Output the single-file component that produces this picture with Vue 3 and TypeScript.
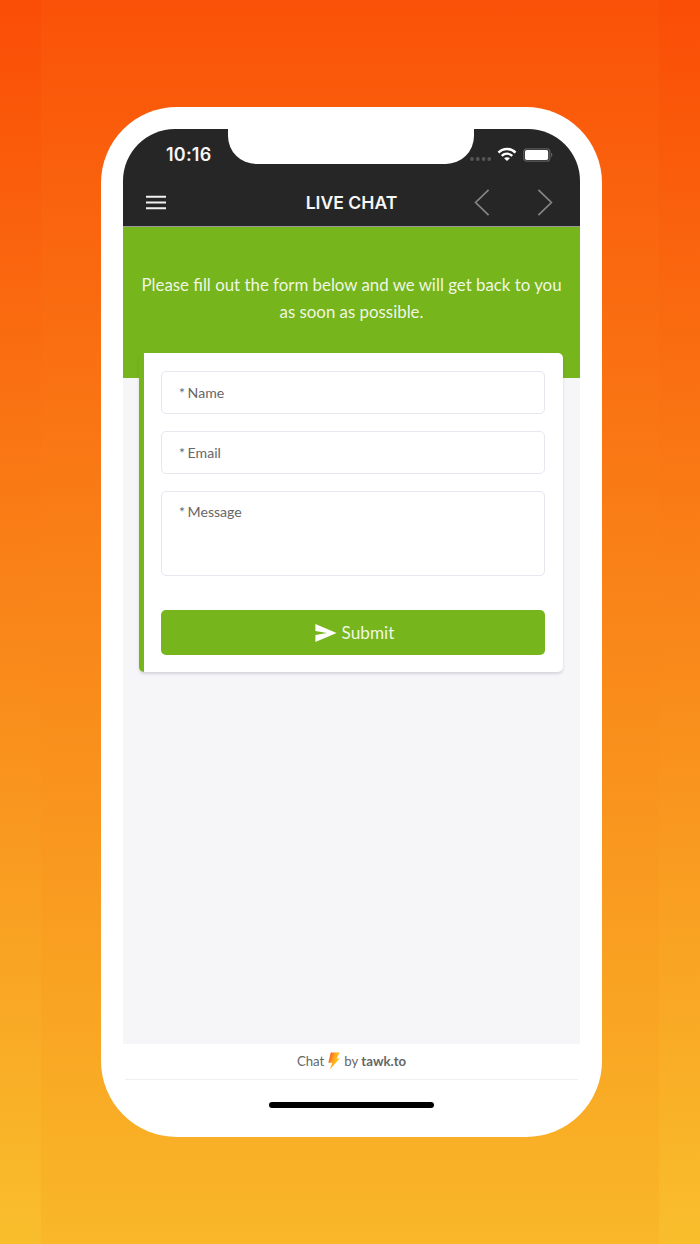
<template>
  <div class="page">
    <div class="phone">
      <div class="screen">
        <div class="notch"></div>
        <!-- 状态栏 -->
        <div class="status">
          <span class="time">10:16</span>
          <div class="signals">
            <svg width="22" height="6" viewBox="0 0 22 6" fill="#555">
              <circle cx="2" cy="3" r="1.9" />
              <circle cx="7.8" cy="3" r="1.9" />
              <circle cx="13.6" cy="3" r="1.9" />
              <circle cx="19.2" cy="3" r="1.9" />
            </svg>
            <svg class="wifi" width="20" height="15" viewBox="0 0 20 15" fill="none" stroke="#fff">
              <path d="M1.5 5.6C6.2 0.8 13.8 0.8 18.5 5.6" stroke-width="2.5" />
              <path d="M4.7 8.9C7.8 6 12.2 6 15.3 8.9" stroke-width="2.3" />
              <path d="M10 14L7.1 11.2C8.7 9.8 11.3 9.8 12.9 11.2Z" fill="#fff" stroke="none" />
            </svg>
            <svg class="battery" width="30" height="14" viewBox="0 0 30 14">
              <rect x="0.8" y="0.8" width="26" height="12.4" rx="3" fill="none" stroke="#5c5c5c" stroke-width="1.3" />
              <rect x="2" y="2" width="23.2" height="10" rx="1.8" fill="#fff" />
              <path d="M28 4.8C29.8 5.4 29.8 8.6 28 9.2Z" fill="#5c5c5c" />
            </svg>
          </div>
        </div>

        <!-- 导航栏 -->
        <div class="nav">
          <svg class="menu" width="20" height="16" viewBox="0 0 20 16" stroke="#f2f2f2" stroke-width="2">
            <path d="M0 1.7H20M0 7.5H20M0 13.3H20" />
          </svg>
          <h1>LIVE CHAT</h1>
          <div class="arrows">
            <svg width="16" height="28" viewBox="0 0 16 28" fill="none" stroke="#858585" stroke-width="1.7">
              <path d="M14.6 0.8L1.6 13.5L14.6 26.2" />
            </svg>
            <svg width="16" height="28" viewBox="0 0 16 28" fill="none" stroke="#858585" stroke-width="1.7">
              <path d="M1.4 0.8L14.4 13.5L1.4 26.2" />
            </svg>
          </div>
        </div>

        <div class="banner">
          <p>Please fill out the form below and we will get back to you<br />as soon as possible.</p>
        </div>

        <!-- 表单 -->
        <form class="card" @submit.prevent="submit">
          <input v-model="form.name" type="text" placeholder="* Name" />
          <input v-model="form.email" type="text" placeholder="* Email" />
          <textarea v-model="form.message" placeholder="* Message"></textarea>
          <button type="submit">
            <svg width="22" height="18" viewBox="0 0 22 18" fill="#fff">
              <path d="M0.4 0L21.6 9L0.4 18V11L12 9L0.4 7Z" />
            </svg>
            <span>Submit</span>
          </button>
        </form>
      </div>

      <div class="footer">
        <span>Chat</span>
        <svg width="12" height="18" viewBox="0 0 12 18">
          <defs>
            <linearGradient id="bolt" x1="0" y1="0" x2="1" y2="0.5">
              <stop offset="0.1" stop-color="#f4511e" />
              <stop offset="0.5" stop-color="#ffa51b" />
              <stop offset="1" stop-color="#ffd21f" />
            </linearGradient>
          </defs>
          <path d="M2.8 0.5H11.8L8.6 6.4H11.8L1.8 17.5L4.3 10.7H0.3Z" fill="url(#bolt)" />
        </svg>
        <span>by <b>tawk.to</b></span>
      </div>
      <div class="home"></div>
    </div>
  </div>
</template>

<script setup lang="ts">
import { reactive } from 'vue'

interface ChatForm {
  name: string
  email: string
  message: string
}

const form = reactive<ChatForm>({
  name: '',
  email: '',
  message: ''
})

const submit = () => {
  console.log('form=', form)
}
</script>

<style>
body {
  margin: 0;
}
</style>

<style scoped>
* {
  box-sizing: border-box;
}

/* 中间一层渐变比两侧稍窄 */
.page {
  width: 700px;
  height: 1244px;
  padding: 107px 0 0 101px;
  overflow: hidden;
  font-family: Lato, 'Liberation Sans', sans-serif;
  background:
    linear-gradient(180deg, #fa5208 0%, #f98619 50%, #f9b729 100%) 41px 0 / 618px 100% no-repeat,
    linear-gradient(180deg, #fa4d06 0%, #f98619 50%, #f9be2c 100%);
}

.phone {
  width: 501px;
  height: 1030px;
  padding: 22px 22px 0;
  border-radius: 76px;
  background: #fff;
}

.screen {
  position: relative;
  height: 915px;
  border-radius: 52px 52px 0 0;
  overflow: hidden;
  background: #f6f6f9;
}

.notch {
  position: absolute;
  top: 0;
  left: 105px;
  width: 246px;
  height: 35px;
  border-radius: 0 0 28px 28px;
  background: #fff;
}

.status {
  display: flex;
  justify-content: space-between;
  height: 50px;
  padding: 0 27px 0 43px;
  background: #262626;
}

.time {
  margin-top: 16px;
  font: 600 18px/20px Inter, sans-serif;
  letter-spacing: 0.2px;
  color: #f6f6f6;
}

.signals {
  display: flex;
  align-items: flex-start;
  padding-top: 19px;
}

.signals svg:first-child {
  margin-top: 8px;
}

.wifi {
  margin: -1px 6px 0 5px;
}

.nav {
  display: grid;
  grid-template-columns: 1fr auto 1fr;
  align-items: center;
  height: 48px;
  padding: 0 23px;
  border-bottom: 1px solid #999;
  background: #262626;
}

.nav h1 {
  margin: 0;
  font: 600 17.6px/24px Inter, sans-serif;
  color: #f6f6f6;
}

.arrows {
  display: flex;
  justify-content: flex-end;
  gap: 47px;
  margin-right: 4px;
}

.banner {
  height: 151px;
  padding-top: 44px;
  background: #77b51c;
}

.banner p {
  margin: 0;
  font-size: 16.85px;
  line-height: 27px;
  text-align: center;
  white-space: nowrap;
  color: rgba(255, 255, 255, 0.9);
}

.card {
  position: relative;
  display: flex;
  flex-direction: column;
  gap: 17px;
  width: 424px;
  height: 319px;
  margin: -25px 0 0 16px;
  padding: 18px 18px 0 17px;
  border-left: 5px solid #77b51c;
  border-radius: 5px;
  background: #fff;
  box-shadow: 0 2px 3px rgba(40, 40, 80, 0.16);
}

input,
textarea {
  display: block;
  flex: none;
  width: 100%;
  height: 43px;
  margin: 0;
  padding: 0 17px;
  border: 1.5px solid #e7e7ef;
  border-radius: 5px;
  outline: none;
  resize: none;
  font: 14.1px/20px Lato, sans-serif;
  word-spacing: -1px;
  background: #fff;
}

textarea {
  height: 85px;
  padding-top: 10px;
}

input::placeholder,
textarea::placeholder {
  color: #666;
  opacity: 1;
}

button {
  display: flex;
  flex: none;
  align-items: center;
  justify-content: center;
  gap: 5px;
  height: 45px;
  margin-top: 17px;
  padding: 0 0 0 3px;
  border: 0;
  border-radius: 5px;
  font: 17.2px/20px Lato, sans-serif;
  color: rgba(255, 255, 255, 0.9);
  background: #77b51c;
}

.footer {
  display: flex;
  align-items: center;
  justify-content: center;
  gap: 4px;
  height: 36px;
  margin: 0 2px;
  padding-bottom: 2px;
  border-bottom: 1px solid #f0f0f0;
  font-size: 13.2px;
  color: #666;
}

.home {
  width: 165px;
  height: 6px;
  margin: 22px auto 0;
  border-radius: 3px;
  background: #000;
}
</style>
